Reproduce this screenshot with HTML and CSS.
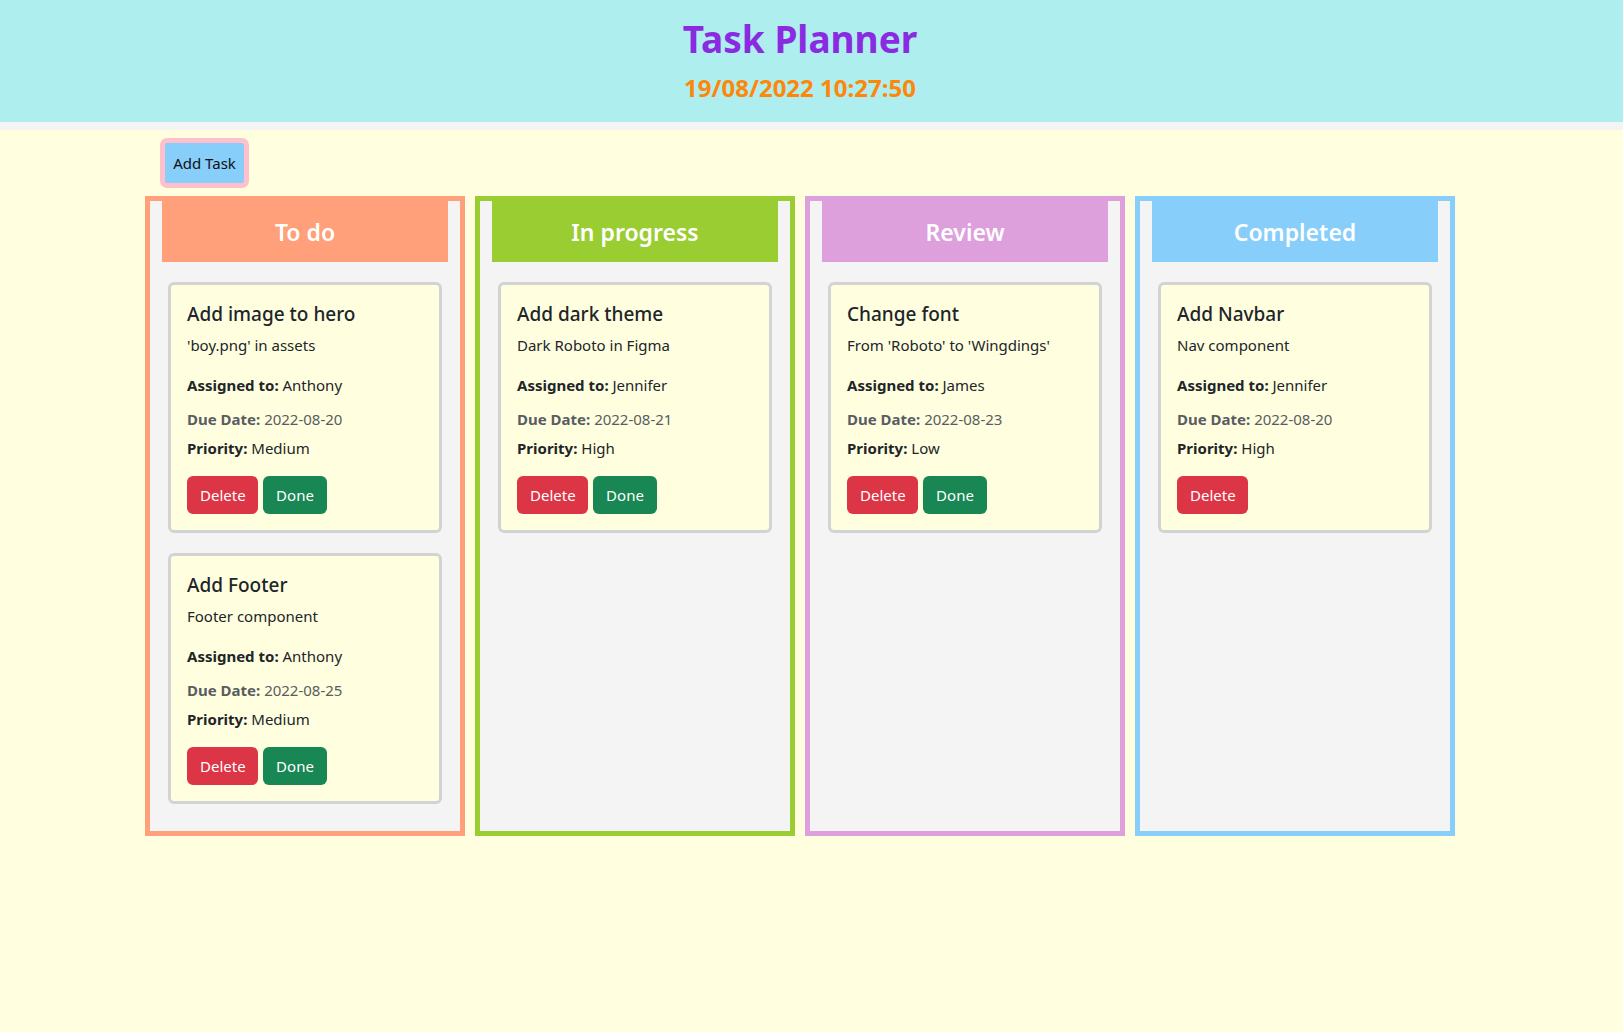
FILE: index.html
```html
<!DOCTYPE html>
<html lang="en">
<head>
<meta charset="utf-8">
<title>Task Planner</title>
<link rel="stylesheet" href="styles.css">
</head>
<body>
<header class="top">
  <h1 class="app-title">Task Planner</h1>
  <div class="clock">19/08/2022 10:27:50</div>
</header>
<div class="strip"></div>
<main class="main">
  <div class="toolbar">
    <button class="add-btn">Add Task</button>
  </div>
  <div class="board">
    <section class="col col-todo">
      <h3 class="col-head">To do</h3>
      <div class="card">
        <h5 class="card-title">Add image to hero</h5>
        <p class="card-desc">'boy.png' in assets</p>
        <p class="card-line"><b>Assigned to:</b> Anthony</p>
        <p class="card-due"><b>Due Date:</b> 2022-08-20</p>
        <p class="card-prio"><b>Priority:</b> Medium</p>
        <div class="actions"><button class="btn btn-del">Delete</button><button class="btn btn-done">Done</button></div>
      </div>
      <div class="card">
        <h5 class="card-title">Add Footer</h5>
        <p class="card-desc">Footer component</p>
        <p class="card-line"><b>Assigned to:</b> Anthony</p>
        <p class="card-due"><b>Due Date:</b> 2022-08-25</p>
        <p class="card-prio"><b>Priority:</b> Medium</p>
        <div class="actions"><button class="btn btn-del">Delete</button><button class="btn btn-done">Done</button></div>
      </div>
    </section>
    <section class="col col-progress">
      <h3 class="col-head">In progress</h3>
      <div class="card">
        <h5 class="card-title">Add dark theme</h5>
        <p class="card-desc">Dark Roboto in Figma</p>
        <p class="card-line"><b>Assigned to:</b> Jennifer</p>
        <p class="card-due"><b>Due Date:</b> 2022-08-21</p>
        <p class="card-prio"><b>Priority:</b> High</p>
        <div class="actions"><button class="btn btn-del">Delete</button><button class="btn btn-done">Done</button></div>
      </div>
    </section>
    <section class="col col-review">
      <h3 class="col-head">Review</h3>
      <div class="card">
        <h5 class="card-title">Change font</h5>
        <p class="card-desc">From 'Roboto' to 'Wingdings'</p>
        <p class="card-line"><b>Assigned to:</b> James</p>
        <p class="card-due"><b>Due Date:</b> 2022-08-23</p>
        <p class="card-prio"><b>Priority:</b> Low</p>
        <div class="actions"><button class="btn btn-del">Delete</button><button class="btn btn-done">Done</button></div>
      </div>
    </section>
    <section class="col col-done">
      <h3 class="col-head">Completed</h3>
      <div class="card">
        <h5 class="card-title">Add Navbar</h5>
        <p class="card-desc">Nav component</p>
        <p class="card-line"><b>Assigned to:</b> Jennifer</p>
        <p class="card-due"><b>Due Date:</b> 2022-08-20</p>
        <p class="card-prio"><b>Priority:</b> High</p>
        <div class="actions"><button class="btn btn-del">Delete</button></div>
      </div>
    </section>
  </div>
</main>
</body>
</html>
```

FILE: styles.css
```css
* { box-sizing: border-box; }
html, body { margin: 0; padding: 0; }
body {
  background: #ffffe0;
  font-family: "Noto Sans", "Open Sans", sans-serif;
  color: #212529;
  font-size: 15px;
  line-height: 1.5;
  min-height: 1032px;
}
.top {
  background: #afeeee;
  height: 122px;
  padding: 15px 23px 0 0;
  text-align: center;
}
.app-title {
  margin: 0;
  font-size: 37px;
  line-height: 48px;
  font-weight: 700;
  color: #8a2be2;
}
.clock {
  margin-top: 10px;
  font-size: 24px;
  line-height: 30px;
  font-weight: 700;
  color: #fd8708;
}
.strip { height: 8px; background: #f4f4f4; }
.main { padding-top: 8px; }
.toolbar { padding-left: 160px; }
.add-btn {
  font-family: inherit;
  font-size: 15px;
  line-height: 24px;
  color: #111;
  background: #87cefa;
  border: 5px solid #ffc0cb;
  border-radius: 7px;
  padding: 8px 7px;
  height: 50px;
  width: 89px;
  display: block;
}
.board {
  display: flex;
  gap: 10px;
  padding-left: 145px;
  margin-top: 8px;
  align-items: stretch;
}
.col {
  width: 320px;
  height: 640px;
  border: 5px solid;
  background: #f4f4f4;
  padding: 0 12px;
}
.col-todo { border-color: #ffa07a; }
.col-todo .col-head { background: #ffa07a; }
.col-progress { border-color: #9acd32; }
.col-progress .col-head { background: #9acd32; }
.col-review { border-color: #dda0dd; }
.col-review .col-head { background: #dda0dd; }
.col-done { border-color: #87cefa; }
.col-done .col-head { background: #87cefa; }
.col-head {
  margin: 0 0 20px;
  height: 61px;
  line-height: 62px;
  text-align: center;
  color: #fff;
  font-size: 23px;
  font-weight: 600;
}
.card {
  margin: 0 6px 20px;
  background: #ffffe0;
  border: 3px solid #d3d3d3;
  border-radius: 6px;
  padding: 17px 16px 16px;
}
.card-title {
  margin: 0 0 7px;
  font-size: 19px;
  line-height: 24px;
  font-weight: 500;
}
.card p { margin: 0; line-height: 24px; }
.card-desc { margin-bottom: 16px !important; }
.card-line b, .card-prio b, .card-due b { font-weight: 700; }
.card-due { margin-top: 10px !important; color: #595c60; }
.card-prio { margin-top: 5px !important; }
.actions { margin-top: 16px; display: flex; gap: 5px; }
.btn {
  font-family: inherit;
  font-size: 15px;
  line-height: 24px;
  color: #fff;
  border: 1px solid transparent;
  border-radius: 6px;
  padding: 6px 12px;
  height: 38px;
}
.btn-del { background: #dc3545; width: 71px; }
.btn-done { background: #198754; width: 64px; }
```
